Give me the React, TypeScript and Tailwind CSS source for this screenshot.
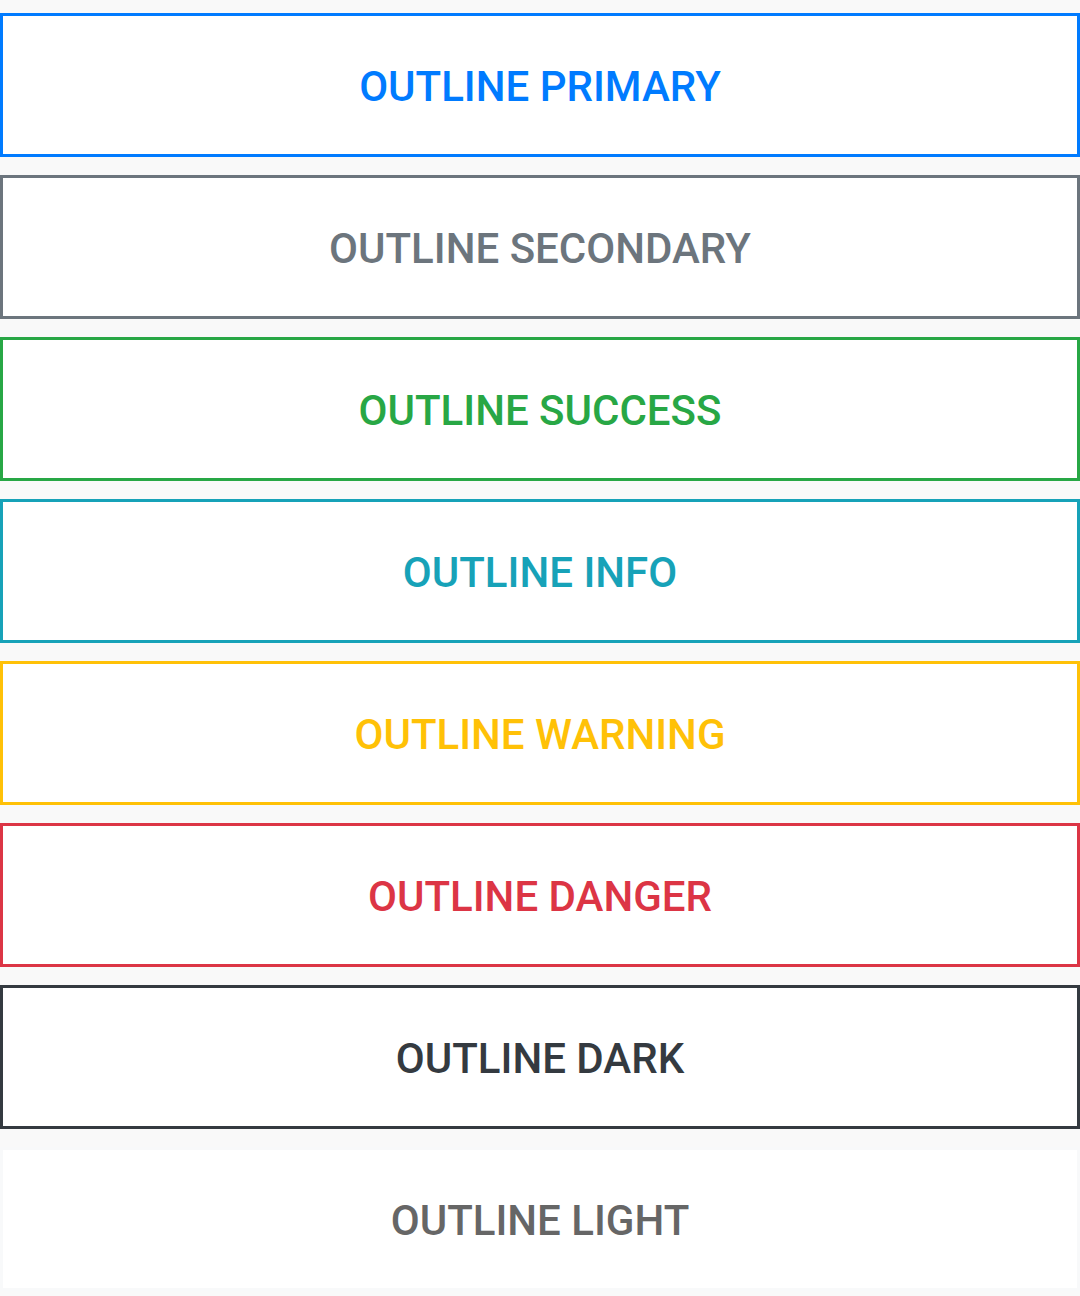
import React from 'react';

const BUTTONS = [
  { label: 'Outline Primary', cls: 'border-[#007bff] text-[#007bff]' },
  { label: 'Outline Secondary', cls: 'border-[#6c757d] text-[#6c757d]' },
  { label: 'Outline Success', cls: 'border-[#28a745] text-[#28a745]' },
  { label: 'Outline Info', cls: 'border-[#17a2b8] text-[#17a2b8]' },
  { label: 'Outline Warning', cls: 'border-[#ffc107] text-[#ffc107]' },
  { label: 'Outline Danger', cls: 'border-[#dc3545] text-[#dc3545]' },
  { label: 'Outline Dark', cls: 'border-[#343a40] text-[#343a40]' },
  { label: 'Outline Light', cls: 'border-[#f8f9fa] text-[#666666]' },
];

export default function App() {
  return (
    <div className="min-h-[1296px] bg-[#f9f9f9] pt-[13px] flex flex-col gap-[18px] font-['Roboto',sans-serif]">
      {BUTTONS.map((b) => (
        <button
          key={b.label}
          className={`w-full h-[144px] bg-white border-[3px] ${b.cls} flex items-center justify-center pt-[4px] uppercase font-medium text-[42px] leading-none`}
        >
          {b.label}
        </button>
      ))}
    </div>
  );
}
